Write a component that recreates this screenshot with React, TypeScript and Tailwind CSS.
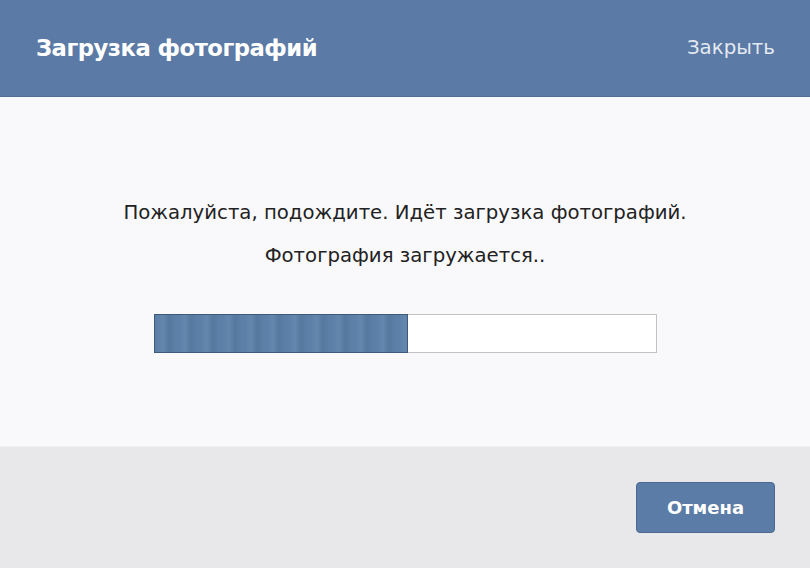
export default function App() {
  const progress = 50.4;
  return (
    <div className="w-[810px] h-[568px] flex flex-col bg-[#f9f9fb] font-['DejaVu_Sans',sans-serif] overflow-hidden">
      <header className="h-[97px] shrink-0 bg-[#5b7aa5] flex items-center justify-between pl-[36px] pr-[35px] border-b border-[#4f6d96]">
        <h1 className="text-[22.7px] font-bold text-white tracking-[-0.5px]">Загрузка фотографий</h1>
        <button className="text-[19.8px] text-[#e3e9f1]">Закрыть</button>
      </header>

      <main className="flex-1 flex flex-col items-center pt-[101px]">
        <p className="text-[19.7px] text-[#222] leading-[30px]">Пожалуйста, подождите. Идёт загрузка фотографий.</p>
        <p className="text-[19.7px] text-[#222] leading-[30px] mt-[13px]">Фотография загружается..</p>
        <div className="mt-[43px] w-[503px] h-[39px] border border-[#c2c2c4] bg-white">
          <div
            className="h-full bg-[#5a7ea7] border border-[#3f5a7c] -m-px box-content bg-[repeating-linear-gradient(90deg,#5a7ea7_0px,#6487ae_8px,#55789f_14px,#5d81a9_22px)]"
            style={{ width: `${progress}%` }}
          />
        </div>
      </main>

      <footer className="h-[122px] shrink-0 bg-[#e8e7ea] border-t border-[#f0f0f2] flex items-center justify-end pr-[35px]">
        <button className="w-[139px] h-[51px] rounded-[4px] bg-[#5a7ca6] border border-[#4a6a93] text-white text-[18px] font-bold">
          Отмена
        </button>
      </footer>
    </div>
  );
}
